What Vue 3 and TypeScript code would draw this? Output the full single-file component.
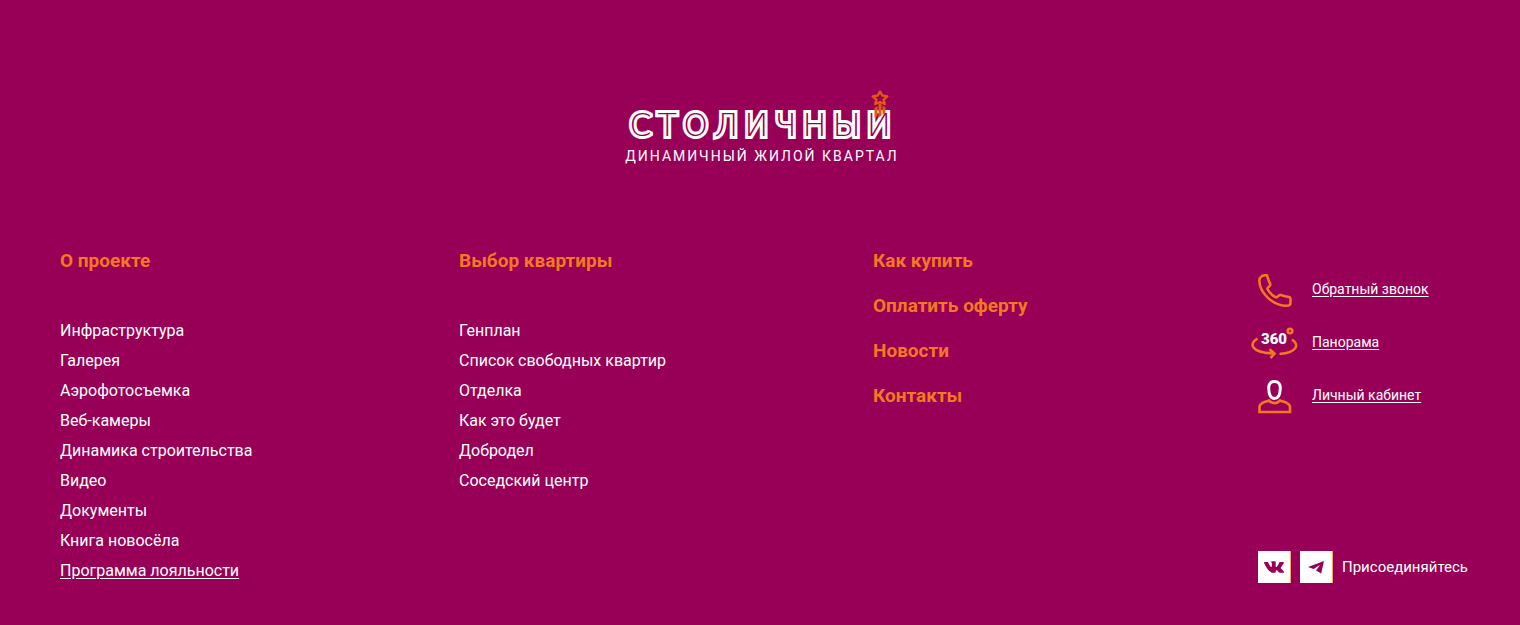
<script setup lang="ts">
interface NavItem {
  label: string
  underlined?: boolean
}

interface NavGroup {
  title: string
  items: NavItem[]
}

const groups: NavGroup[] = [
  {
    title: 'О проекте',
    items: [
      { label: 'Инфраструктура' },
      { label: 'Галерея' },
      { label: 'Аэрофотосъемка' },
      { label: 'Веб-камеры' },
      { label: 'Динамика строительства' },
      { label: 'Видео' },
      { label: 'Документы' },
      { label: 'Книга новосёла' },
      { label: 'Программа лояльности', underlined: true },
    ],
  },
  {
    title: 'Выбор квартиры',
    items: [
      { label: 'Генплан' },
      { label: 'Список свободных квартир' },
      { label: 'Отделка' },
      { label: 'Как это будет' },
      { label: 'Добродел' },
      { label: 'Соседский центр' },
    ],
  },
]

const sections: string[] = ['Как купить', 'Оплатить оферту', 'Новости', 'Контакты']
</script>

<template>
  <footer class="footer">
    <a class="logo" href="#" aria-label="Столичный — динамичный жилой квартал">
      <svg width="276" height="76" viewBox="0 0 276 76">
        <defs>
          <clipPath id="wordmark-clip"><rect x="-4" y="20" width="284" height="32" /></clipPath>
        </defs>
        <g clip-path="url(#wordmark-clip)">
          <text class="wordmark" x="141" y="46" text-anchor="middle">СТОЛИЧНЫЙ</text>
        </g>
        <path class="star" d="M258 1.500l2.300 4 5 .9-3.600 3.300 1.100 4.300-4.800-1.800-4.800 1.800 1.100-4.300-3.600-3.300 5-.9z" />
        <path class="rays" d="M252.500 18l3-2v10l-3 2zM256.500 13.500h3v12l-3 2zM260.500 16l3 1v6l-3 2z" />
        <text class="tagline" x="140" y="71" text-anchor="middle">ДИНАМИЧНЫЙ ЖИЛОЙ КВАРТАЛ</text>
      </svg>
    </a>

    <div class="columns">
      <nav v-for="group in groups" :key="group.title" :aria-label="group.title">
        <h2 class="title"><a href="#">{{ group.title }}</a></h2>
        <ul class="list">
          <li v-for="item in group.items" :key="item.label">
            <a href="#" :class="{ underlined: item.underlined }">{{ item.label }}</a>
          </li>
        </ul>
      </nav>

      <nav class="sections" aria-label="Разделы">
        <h2 v-for="section in sections" :key="section" class="title">
          <a href="#">{{ section }}</a>
        </h2>
      </nav>

      <div class="aside">
        <ul class="actions">
          <li>
            <a href="#">
              <span class="icon">
                <svg width="34" height="34" viewBox="0 0 34 34">
                  <path class="line" d="M3.500 2.500C5 1.200 7 1 9 1.300c.8 2.400 1.300 5 3.200 8.500.5 1-.3 2-1.200 2.800-.8.800-2 1.400-1.500 2.400 1.500 3.300 4.700 6.300 8 8.200 1 .6 2-.4 2.700-1.100.8-.8 1.500-1.300 2.500-1 2.600.8 5.400 1.500 8.300 1.900 1.200.2 1.500.7 1.500 1.700v4.300c0 2-1.500 2.800-4 2.800C14.500 31.800 1.500 18.500 1.300 6.500c0-1.600.7-2.900 2.200-4z" />
                </svg>
              </span>
              <span class="label">Обратный звонок</span>
            </a>
          </li>
          <li>
            <a href="#">
              <span class="icon">
                <svg width="47" height="34" viewBox="0 0 47 34">
                  <circle class="line" cx="39" cy="4" r="2.300" />
                  <path class="line" d="M6.500 11.500C-2 16.500-1 25.500 22.500 26.500M18.500 22.200L23.500 26.700L19.500 31M41 12.500C49 18 45.500 25.500 28.500 27" />
                  <text class="degrees" x="23" y="17" text-anchor="middle">360</text>
                </svg>
              </span>
              <span class="label">Панорама</span>
            </a>
          </li>
          <li>
            <a href="#">
              <span class="icon">
                <svg width="34" height="34" viewBox="0 0 34 34">
                  <path class="head" d="M16.500 1.500C12.500 1.500 10.500 4.300 10.700 8.500C10.900 13.500 12.500 18.500 16.500 18.500S22.100 13.500 22.300 8.500C22.500 4.300 20.500 1.500 16.500 1.500z" />
                  <path class="line" d="M11 20.500C8 22 2.800 21.800 1.500 26.500V32H32V26.500C30.700 21.800 25 22 22 20.500C18.800 24 14.200 24 11 20.500z" />
                </svg>
              </span>
              <span class="label">Личный кабинет</span>
            </a>
          </li>
        </ul>

        <div class="social">
          <a class="tile" href="#" aria-label="ВКонтакте">
            <svg width="20" height="20" viewBox="0 0 24 24">
              <path d="M13.162 18.994c.609 0 .858-.406.851-.915-.031-1.917.714-2.949 2.059-1.604 1.488 1.488 1.796 2.519 3.603 2.519h3.200c.808 0 1.126-.26 1.126-.668 0-.863-1.421-2.386-2.625-3.504-1.686-1.565-1.765-1.602-.313-3.486 1.801-2.339 4.157-5.336 2.073-5.336h-3.981c-.772 0-.828.435-1.103 1.083-.995 2.347-2.886 5.387-3.604 4.922-.751-.485-.407-2.406-.35-5.261.015-.754.011-1.271-1.141-1.539-.629-.145-1.241-.205-1.809-.205-2.273 0-3.841.953-2.950 1.119 1.571.293 1.420 3.692 1.054 5.160-.638 2.556-3.036-2.024-4.035-4.305-.241-.548-.315-.974-1.175-.974H.787C.295 6 0 6.160 0 6.516c0 .602 2.960 6.720 5.786 9.770 2.756 2.975 5.480 2.708 7.376 2.708z" />
            </svg>
          </a>
          <a class="tile" href="#" aria-label="Telegram">
            <svg width="16" height="13" viewBox="0 0 16 13">
              <path d="M0 6L16 0L13.200 12.500L8 9.500L12 4L5.500 8z" />
            </svg>
          </a>
          <span class="join">Присоединяйтесь</span>
        </div>
      </div>
    </div>
  </footer>
</template>

<style>
body {
  background: #970056;
}
</style>

<style scoped>
.footer {
  box-sizing: border-box;
  min-height: 100vh;
  padding: 90px 0 40px;
  background: #970056;
  color: #fff;
  font-family: Roboto, "Noto Sans", sans-serif;
  font-size: 16px;
}

a {
  color: inherit;
  text-decoration: none;
}

ul {
  margin: 0;
  padding: 0;
  list-style: none;
}

svg {
  display: block;
}

.logo {
  display: block;
  width: 276px;
  margin: 0 auto;
}

.wordmark {
  font-family: "DejaVu Sans", sans-serif;
  font-size: 32px;
  font-weight: 200;
  letter-spacing: 6px;
  fill: #970056;
  stroke: #fff;
  stroke-width: 6px;
  stroke-miterlimit: 2;
  paint-order: stroke;
}

.tagline {
  font-size: 14px;
  font-weight: 400;
  letter-spacing: 2px;
  fill: #fff;
}

.star {
  fill: none;
  stroke: #e2590f;
  stroke-width: 2.4;
  stroke-linejoin: round;
}

.rays {
  fill: #e2590f;
}

.columns {
  display: grid;
  grid-template-columns: 399fr 414fr 378fr 219px;
  padding: 80px 50px 0 60px;
}

.title {
  margin: 0;
  color: #f47721;
  font-size: 19px;
  font-weight: 700;
  line-height: 30px;
}

.list {
  padding-top: 40px;
  line-height: 30px;
}

.underlined,
.label {
  text-decoration: underline;
  text-underline-offset: 2px;
}

.sections {
  display: flex;
  flex-direction: column;
  gap: 15px;
}

.aside {
  display: flex;
  flex-direction: column;
  justify-content: space-between;
  padding: 28px 0 3px;
}

.actions {
  display: flex;
  flex-direction: column;
  gap: 19px;
}

.actions a {
  display: flex;
  gap: 14px;
  font-size: 14px;
  line-height: 30px;
}

.icon {
  display: flex;
  justify-content: center;
  width: 47px;
}

.line {
  fill: none;
  stroke: #f47721;
  stroke-width: 2.6;
}

.head {
  fill: none;
  stroke: #fff;
  stroke-width: 3px;
}

.degrees {
  fill: #fff;
  font-size: 15px;
  font-weight: 900;
}

.social {
  display: flex;
  align-items: center;
  gap: 9px;
  padding-left: 7px;
  font-size: 15px;
}

.tile {
  box-sizing: border-box;
  display: flex;
  flex: none;
  align-items: center;
  justify-content: center;
  width: 33px;
  height: 32px;
  border-right: 1px solid #f6a56a;
  background: #fff;
}

.tile path {
  fill: #970056;
}

.join {
  white-space: nowrap;
}
</style>
